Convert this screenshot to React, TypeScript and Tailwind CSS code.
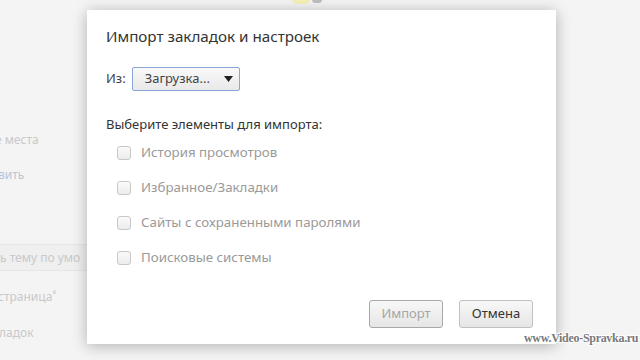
const FONT = "font-['Noto_Sans','Open_Sans',sans-serif]";

const Check = ({ label }: { label: string }) => (
  <div className="flex h-[35px] items-center">
    <span className="ml-[11px] h-[14px] w-[14px] rounded-[3px] border border-[#c8c8c8] bg-gradient-to-b from-[#fafafa] to-[#ececec]" />
    <span className="ml-[10px] text-[13.3px] text-[#9a9a9a]">{label}</span>
  </div>
);

const Btn = ({ label, disabled }: { label: string; disabled?: boolean }) => (
  <button
    className={
      "h-[28px] w-[74px] rounded-[3px] border bg-gradient-to-b from-[#f8f8f8] to-[#e6e6e6] text-[13px] " +
      (disabled ? "border-[#a8a8a8] text-[#a6a6a6]" : "border-[#c0c0c0] text-[#333]")
    }
  >
    {label}
  </button>
);

export default function App() {
  return (
    <div className={`relative flex h-[360px] w-[640px] overflow-hidden bg-[#f4f4f4] ${FONT}`}>
      {/* faded settings page behind the dialog */}
      <div className="flex w-[87px] shrink-0 flex-col overflow-visible text-[12px] text-[#c9c9c9]">
        <div className="ml-[-5px] mt-[131px] whitespace-nowrap">е места</div>
        <div className="ml-[-2px] mt-[17px] whitespace-nowrap text-[#b9c4d6]">вить</div>
        <div className="mt-[60px] flex h-[27px] w-[100px] items-center whitespace-nowrap border-y border-[#e6e6e6] bg-[#efefef]">
          ь тему по умо
        </div>
        <div className="ml-[-2px] mt-[17px] whitespace-nowrap">
          страница<sup className="text-[8px]">*</sup>
        </div>
        <div className="ml-[-1px] mt-[18px] whitespace-nowrap">ладок</div>
      </div>

      <div className="relative z-10 mt-[10px] flex h-[334px] w-[469px] flex-col bg-white pl-[19px] pr-[23px] shadow-[0_2px_14px_rgba(0,0,0,0.28)]">
        <div className="mt-[15px] text-[15.2px] text-[#333]">Импорт закладок и настроек</div>

        <div className="mt-[19px] flex items-center text-[13px] text-[#444]">
          <span>Из:</span>
          <div className="ml-[6px] flex h-[24px] w-[108px] items-center justify-between rounded-[2px] border border-[#8aa6d8] bg-gradient-to-b from-[#f9f9f9] to-[#e9e9e9] pl-[12px] pr-[6px] text-[#444]">
            <span>Загрузка...</span>
            <svg width="9" height="6" viewBox="0 0 9 6">
              <path d="M0 0h9L4.5 6z" fill="#222" />
            </svg>
          </div>
        </div>

        <div className="mt-[24px] text-[13px] text-[#333]">Выберите элементы для импорта:</div>
        <div className="mt-[1px] flex flex-col">
          <Check label="История просмотров" />
          <Check label="Избранное/Закладки" />
          <Check label="Сайты с сохраненными паролями" />
          <Check label="Поисковые системы" />
        </div>

        <div className="mt-auto mb-[16px] flex justify-end gap-[16px]">
          <Btn label="Импорт" disabled />
          <Btn label="Отмена" />
        </div>
      </div>

      <div className="absolute left-[292px] top-[-6px] h-[10px] w-[18px] rounded-full bg-[#f4f0a0] opacity-70" />
      <div className="absolute left-[312px] top-[-4px] h-[7px] w-[10px] rounded-full bg-[#9a9a9a] opacity-60" />

      <div className="absolute left-[524px] top-[329px] z-20 font-['Liberation_Serif',serif] text-[12px] font-bold tracking-[-0.3px] text-[#7a7a7a] [text-shadow:1px_1px_0_#fff,-1px_-1px_0_#fff,1px_-1px_0_#fff,-1px_1px_0_#fff]">
        www.Video-Spravka.ru
      </div>
    </div>
  );
}
